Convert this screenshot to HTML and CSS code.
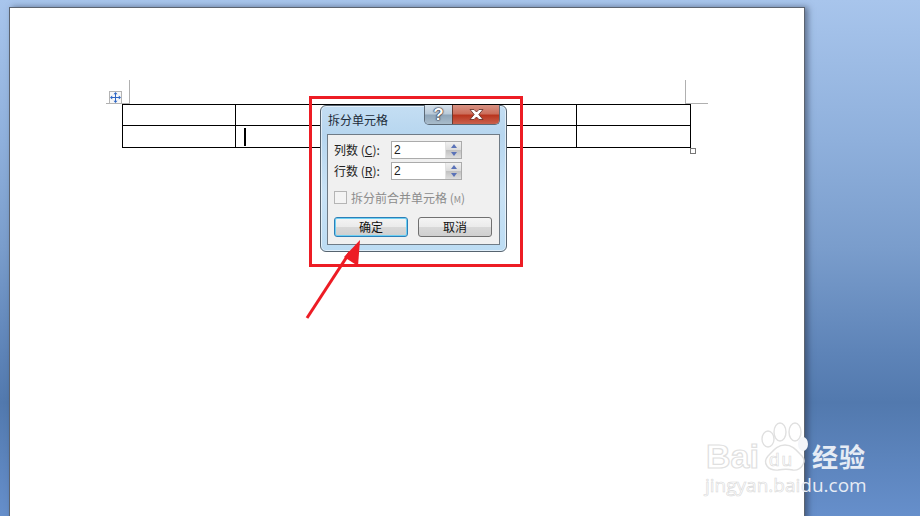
FILE: index.html
```html
<!DOCTYPE html>
<html lang="zh-CN">
<head>
  <meta charset="UTF-8">
  <title>拆分单元格</title>
  <link rel="stylesheet" href="styles.css">
</head>
<body>

<div class="sheet">
  <table class="doc-table">
    <tr><td></td><td></td><td></td><td></td><td></td></tr>
    <tr><td></td><td><span class="caret"></span></td><td></td><td></td><td></td></tr>
  </table>
</div>

<!-- table marks around the document table -->
<span class="mark mark-v mark-left"></span>
<span class="mark mark-h mark-left-h"></span>
<span class="mark mark-v mark-right"></span>
<span class="mark mark-h mark-right-h"></span>
<span class="move-handle">
  <svg width="11" height="11" viewBox="0 0 11 11">
    <path d="M5.5 1.5 V9.5 M1.5 5.5 H9.5" stroke="#2f66c4" stroke-width="1" fill="none"/>
    <path d="M5.5 0 L7.5 2.2 H3.5 Z M5.5 11 L7.5 8.8 H3.5 Z M0 5.5 L2.2 3.5 V7.5 Z M11 5.5 L8.8 3.5 V7.5 Z" fill="#2f66c4"/>
  </svg>
</span>
<span class="resize-handle"></span>

<div class="dialog">
  <div class="titlebar">
    <span class="title">拆分单元格</span>
    <div class="caption-btns">
      <span class="cap-btn cap-help">?</span>
      <span class="cap-btn cap-close">
        <svg width="15" height="11" viewBox="0 0 15 11">
          <path d="M1 0.5 H5 L7.5 3 L10 0.5 H14 L9.8 5.5 L14 10.5 H10 L7.5 8 L5 10.5 H1 L5.2 5.5 Z" fill="#fff" stroke="#5b2a22" stroke-width="0.8"/>
        </svg>
      </span>
    </div>
  </div>
  <div class="panel">
    <div class="field">
      <label class="field-label">列数 (<u>C</u>):</label>
      <div class="spin">
        <span class="spin-value">2</span>
        <span class="spin-arrows"><i class="up"></i><i class="down"></i></span>
      </div>
    </div>
    <div class="field">
      <label class="field-label">行数 (<u>R</u>):</label>
      <div class="spin">
        <span class="spin-value">2</span>
        <span class="spin-arrows"><i class="up"></i><i class="down"></i></span>
      </div>
    </div>
    <div class="merge">
      <span class="checkbox"></span>
      <span>拆分前合并单元格 (<small>M</small>)</span>
    </div>
    <div class="actions">
      <button class="btn btn-default">确定</button>
      <button class="btn">取消</button>
    </div>
  </div>
</div>

<!-- red annotation -->
<div class="highlight"></div>
<svg class="arrow" width="70" height="90" viewBox="0 0 70 90">
  <line x1="7" y1="88" x2="50" y2="22" stroke="#ed1c24" stroke-width="3"/>
  <polygon points="60,10 44,27 58,36" fill="#ed1c24"/>
</svg>

<!-- watermark -->
<div class="watermark">
  <svg class="paw" width="50" height="55" viewBox="0 0 50 55">
    <g fill="none" stroke="#e0e0e0" stroke-width="1.4">
      <ellipse cx="8" cy="19" rx="6" ry="8"/>
      <ellipse cx="20" cy="12" rx="6" ry="9"/>
      <ellipse cx="35" cy="12" rx="6" ry="9"/>
      <path d="M25 25 C33 25 37 31 42 36 C47 42 41 51 33 50 C28 49 24 49 18 50 C8 51 2 43 8 36 C13 31 17 25 25 25 Z"/>
    </g>
    <ellipse cx="43" cy="24" rx="5" ry="7" fill="#f3f5f9"/>
  </svg>
  <div class="wm-logo">
    <span class="wm-bai">Bai</span><span class="wm-du">du</span><span class="wm-cn">经验</span>
  </div>
  <div class="wm-url"><span class="wm-url-dark">jingyan.bai</span>du.com</div>
</div>

</body>
</html>
```

FILE: styles.css
```css
* { box-sizing: border-box; }
body {
  margin: 0;
  width: 920px;
  height: 516px;
  overflow: hidden;
  position: relative;
  font-family: "Noto Sans CJK SC", "Liberation Sans", sans-serif;
  font-size: 12px;
  color: #222;
  padding: 7px 0 0 9px;
  background: linear-gradient(180deg, #a8c5ec 0%, #8fb0dc 27%, #7a9dcc 48%, #5e84b8 68%, #5279ae 78%, #668fcb 100%);
}
.sheet {
  width: 796px;
  height: 520px;
  background: #fff;
  border: 1px solid #5c6470;
  border-bottom: 0;
  box-shadow: 3px 0 6px rgba(40, 50, 70, 0.55);
  padding: 96px 0 0 112px;
}
.doc-table {
  border-collapse: collapse;
  table-layout: fixed;
  width: 569px;
}
.doc-table td {
  height: 22px;
  border: 1px solid #000;
  padding: 0 0 0 8px;
  vertical-align: middle;
}
.doc-table tr:first-child td { height: 21px; }
.doc-table td:nth-child(1),
.doc-table td:nth-child(4) { width: 113px; }
.caret {
  display: block;
  width: 2px;
  height: 18px;
  background: #000;
}

.mark { position: absolute; background: #b0b0b0; }
.mark-v { width: 1px; height: 24px; top: 80px; }
.mark-h { height: 1px; top: 103px; }
.mark-left { left: 129px; }
.mark-right { left: 685px; }
.mark-left-h { left: 106px; width: 23px; }
.mark-right-h { left: 685px; width: 23px; }
.move-handle {
  position: absolute;
  left: 109px;
  top: 91px;
  width: 13px;
  height: 13px;
  background: #f8f8f8;
  border: 1px solid #b4b4b4;
  display: flex;
  align-items: center;
  justify-content: center;
}
.resize-handle {
  position: absolute;
  left: 690px;
  top: 148px;
  width: 6px;
  height: 6px;
  background: #fff;
  border: 1px solid #777;
}

.dialog {
  position: absolute;
  left: 320px;
  top: 105px;
  width: 187px;
  height: 147px;
  border: 1px solid #56636f;
  border-radius: 6px;
  padding: 0 6px 6px;
  display: flex;
  flex-direction: column;
  background: linear-gradient(180deg, #c4def3 0%, #b7d6ef 20%, #c9e2f5 60%, #bcdcf3 100%);
  box-shadow: inset 0 0 0 1px rgba(255, 255, 255, 0.55);
}
.titlebar {
  height: 28px;
  display: flex;
  justify-content: space-between;
  align-items: flex-start;
  flex: none;
}
.title {
  font-size: 12px;
  line-height: 15px;
  margin: 6px 0 0 1px;
  color: #1c2a38;
}
.caption-btns {
  display: flex;
  height: 20px;
  margin-top: -1px;
  border: 1px solid #5d6b78;
  border-top: 0;
  border-radius: 0 0 5px 5px;
  overflow: hidden;
}
.cap-btn {
  display: flex;
  align-items: center;
  justify-content: center;
}
.cap-help {
  width: 27px;
  background: linear-gradient(180deg, #d6e2ec 0%, #b9cad9 48%, #8ea5b9 52%, #a9bccb 100%);
  color: #fff;
  font: bold 17px "Liberation Sans", sans-serif;
  text-shadow: 0 0 1px #223, 0 0 1px #223, 0 0 2px #223;
}
.cap-close {
  width: 47px;
  border-left: 1px solid #6a3a30;
  background: linear-gradient(180deg, #d99384 0%, #cc6f5c 45%, #b9361f 55%, #c9614d 100%);
}
.panel {
  flex: 1;
  background: #f0f0f0;
  border: 1px solid #6f7b86;
  padding: 6px 6px 0;
  display: flex;
  flex-direction: column;
}
.field {
  display: flex;
  align-items: center;
  height: 18px;
  margin-bottom: 3px;
}
.field-label {
  width: 57px;
  line-height: 18px;
  font-size: 12px;
}
.spin {
  width: 71px;
  height: 18px;
  background: #fff;
  border: 1px solid #ababab;
  display: flex;
  justify-content: space-between;
  align-items: stretch;
}
.spin-value {
  font: 12px/16px "Liberation Sans", sans-serif;
  padding-left: 2px;
}
.spin-arrows {
  width: 16px;
  display: flex;
  flex-direction: column;
  border-left: 1px solid #e2e2e2;
  background: linear-gradient(180deg, #f1f1f1 0%, #dcdcdc 48%, #c0c0c0 50%, #dedede 100%);
}
.spin-arrows i {
  flex: 1;
  display: flex;
  align-items: center;
  justify-content: center;
}
.spin-arrows i::before {
  content: "";
  border-left: 3.5px solid transparent;
  border-right: 3.5px solid transparent;
}
.spin-arrows .up::before { border-bottom: 4px solid #5a72b8; }
.spin-arrows .down::before { border-top: 4px solid #5a72b8; }
.merge {
  display: flex;
  align-items: center;
  gap: 4px;
  margin-top: 7px;
  height: 14px;
  color: #8c8c8c;
  font-size: 12px;
}
.merge small { font-size: 9px; }
.checkbox {
  width: 13px;
  height: 13px;
  border: 1px solid #b5b5b5;
  background: #f4f4f4;
}
.actions {
  display: flex;
  justify-content: space-between;
  margin-top: 13px;
  width: 158px;
}
.btn {
  width: 74px;
  height: 20px;
  padding: 0;
  font: 12px/16px "Noto Sans CJK SC", sans-serif;
  color: #111;
  border: 1px solid #707070;
  border-radius: 3px;
  background: linear-gradient(180deg, #f4f4f4 0%, #ebebeb 48%, #d8d8d8 52%, #cfcfcf 100%);
}
.btn-default {
  border-color: #2c7fb8;
  box-shadow: inset 0 0 0 1px #6fd0f2;
}

.highlight {
  position: absolute;
  left: 309px;
  top: 96px;
  width: 214px;
  height: 171px;
  border: 3px solid #ed1c24;
}
.arrow {
  position: absolute;
  left: 300px;
  top: 230px;
}

.watermark {
  position: absolute;
  left: 704px;
  top: 416px;
  width: 170px;
  height: 84px;
}
.paw { position: absolute; left: 56px; top: 4px; }
.wm-logo {
  position: absolute;
  left: 2px;
  top: 20px;
  display: flex;
  align-items: center;
  white-space: nowrap;
}
.wm-bai {
  font: bold 34px/40px "Liberation Sans", sans-serif;
  color: #fff;
  -webkit-text-stroke: 1.2px #e0e0e0;
}
.wm-du {
  font: 19px/24px "Liberation Sans", sans-serif;
  letter-spacing: 2px;
  color: #fff;
  -webkit-text-stroke: 0.6px #d8d8d8;
  margin: 8px 18px 0 10px;
}
.wm-cn {
  font: bold 26px/34px "Noto Sans CJK SC", sans-serif;
  color: #e6ecf5;
  letter-spacing: 1px;
}
.wm-url {
  position: absolute;
  left: 1px;
  top: 56px;
  font: 19px/26px "Open Sans", sans-serif;
  color: #e6ecf5;
  white-space: nowrap;
}
.wm-url-dark {
  color: #fff;
  -webkit-text-stroke: 0.6px #d8d8d8;
}
```
